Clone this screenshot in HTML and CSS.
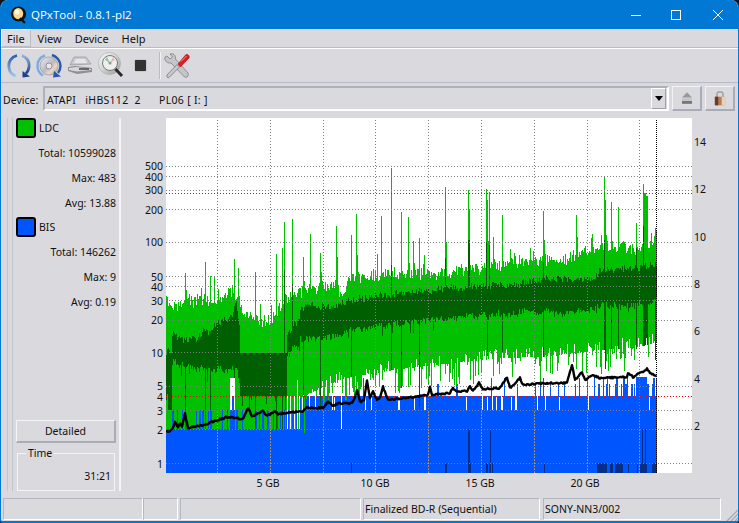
FILE: index.html
```html
<!DOCTYPE html>
<html lang="en">
<head>
<meta charset="utf-8">
<title>QPxTool - 0.8.1-pl2</title>
<link rel="stylesheet" href="styles.css">
</head>
<body>
<div class="window">
  <header class="titlebar">
    <svg class="app-icon" viewBox="0 0 18 18" width="18" height="18">
      <circle cx="8.5" cy="8" r="7.6" fill="#111"/>
      <ellipse cx="8.2" cy="7.6" rx="5" ry="5.6" fill="#f6d98a"/>
      <ellipse cx="7" cy="6" rx="2.4" ry="2.8" fill="#fff6dc"/>
      <path d="M10 12 L15 17" stroke="#111" stroke-width="2.4"/>
    </svg>
    <span class="title-text">QPxTool - 0.8.1-pl2</span>
    <div class="win-buttons">
      <svg class="win-btn" viewBox="0 0 10 10" width="10" height="10"><path d="M0 5.5H10" stroke="#fff"/></svg>
      <svg class="win-btn" viewBox="0 0 10 10" width="10" height="10"><rect x=".5" y=".5" width="9" height="9" fill="none" stroke="#fff"/></svg>
      <svg class="win-btn close" viewBox="0 0 10 10" width="10" height="10"><path d="M0 0L10 10M10 0L0 10" stroke="#fff" stroke-width="1"/></svg>
    </div>
  </header>

  <nav class="menubar">
    <span class="menu-item active">File</span>
    <span class="menu-item">View</span>
    <span class="menu-item">Device</span>
    <span class="menu-item">Help</span>
  </nav>

  <div class="toolbar">
    <svg class="tool t-refresh" viewBox="0 0 24 24" width="24" height="24">
      <defs>
        <linearGradient id="ga" x1="0" y1="0" x2="0" y2="1"><stop offset="0" stop-color="#2f5fa8"/><stop offset="1" stop-color="#9cc4ea"/></linearGradient>
        <linearGradient id="gb" x1="0" y1="0" x2="0" y2="1"><stop offset="0" stop-color="#8fb4dc"/><stop offset="1" stop-color="#1c3f8c"/></linearGradient>
      </defs>
      <path d="M10 1.5C4 3 1.5 8 1.8 12.500C2 17 4.500 20.500 8.500 22" fill="none" stroke="url(#ga)" stroke-width="2.800"/>
      <path d="M15 1.500C20 3.500 22.500 8 22 13C21.700 16 20.500 18 19 19.500" fill="none" stroke="url(#gb)" stroke-width="2.800"/>
      <path d="M15.500 17L23 22.500L15.500 23.500Z" fill="#1c3f8c"/>
    </svg>
    <svg class="tool t-disc" viewBox="0 0 26 26" width="26" height="26">
      <defs>
        <linearGradient id="gd" x1="0" y1="0" x2="1" y2="1"><stop offset="0" stop-color="#f0f0f0"/><stop offset=".5" stop-color="#b9b9c0"/><stop offset=".7" stop-color="#e8d8c8"/><stop offset="1" stop-color="#8e8e98"/></linearGradient>
      </defs>
      <circle cx="13" cy="13" r="9" fill="url(#gd)" stroke="#8a8a92" stroke-width=".6"/>
      <circle cx="13" cy="13" r="3" fill="#e8e8ec" stroke="#77777f" stroke-width=".7"/>
      <path d="M9 2.500C4 4 1.500 8 1.500 13C1.500 17 3.500 20.500 7 22.500" fill="none" stroke="#7faadf" stroke-width="2.400"/>
      <path d="M16 2C21 3.500 24.500 8 24.500 13C24.500 16 23.500 18 22 20" fill="none" stroke="#2a58a8" stroke-width="2.400"/>
      <path d="M18 18L25 23.500L17 24.500Z" fill="#2a58a8"/>
    </svg>
    <svg class="tool t-drive" viewBox="0 0 26 20" width="26" height="20">
      <path d="M7 1L19 1L24 8L3 9Z" fill="#c9c9cc" stroke="#8c8c92" stroke-width=".6"/>
      <path d="M9 3L18 3L20 7L7 7Z" fill="#e6e6e8"/>
      <path d="M1 11L8 10L25 12L25 16L10 18L1 15Z" fill="#8f8f94"/>
      <path d="M2 12L9 11L24 13L24 14L10 15.500L2 14Z" fill="#d8d8da"/>
      <path d="M12 13H22" stroke="#444" stroke-width="1.400"/>
    </svg>
    <svg class="tool t-scan" viewBox="0 0 26 27" width="26" height="27">
      <defs>
        <linearGradient id="gs" x1="0" y1="0" x2="1" y2="1"><stop offset="0" stop-color="#fdfdfd"/><stop offset=".45" stop-color="#d5d8d6"/><stop offset="1" stop-color="#97979a"/></linearGradient>
      </defs>
      <circle cx="11.500" cy="11.500" r="11" fill="url(#gs)" stroke="#a8a8ac" stroke-width=".6"/>
      <circle cx="12" cy="11" r="7.500" fill="#eef0ee" stroke="#77777a" stroke-width="1"/>
      <path d="M7 8L12 11L9 5Z" fill="#8fc7a0"/>
      <path d="M12 11L15 5L17 8Z" fill="#e8b8c0"/>
      <circle cx="12" cy="11" r="1.600" fill="#999"/>
      <path d="M17.500 17L24 24" stroke="#2a2a2a" stroke-width="3"/>
    </svg>
    <span class="t-stop"></span>
    <span class="tool-sep"></span>
    <svg class="tool t-tools" viewBox="0 0 26 26" width="26" height="26">
      <path d="M3 3L6 6L8.500 4L6 1C9 0 12 2 11.500 6L24 20C25 23 23 25 20.500 24L7 10C3.500 10.500 0 8 1 4Z" fill="#c4c6ca" stroke="#74767c" stroke-width=".7"/>
      <path d="M3 22L13 11.500L15.500 14L5 24.500C3.500 25 2.500 24 3 22Z" fill="#c6c8cc" stroke="#6c6e74" stroke-width=".7"/>
      <path d="M14 11L22 1.500C24 1 26 3 25 5L16.500 14Z" fill="#e01c20" stroke="#a01418" stroke-width=".6"/>
      <path d="M17 8.500L22.500 3" stroke="#ff8c8c" stroke-width="1"/>
    </svg>
  </div>

  <div class="device-row">
    <span class="device-label">Device:</span>
    <div class="combo">
      <span class="combo-text">ATAPI   iHBS112  2      PL06 [ I: ]</span>
      <span class="combo-arrow"><i class="arrow"></i></span>
    </div>
    <button class="icon-btn">
      <svg viewBox="0 0 12 14" width="10" height="12">
        <path d="M6 0L12 6.500H0Z" fill="#9a9a9c"/>
        <rect x="0" y="7.500" width="12" height="2.500" fill="#c4c4c6"/>
        <rect x="0" y="10.500" width="12" height="3.500" fill="#77777a"/>
      </svg>
    </button>
    <button class="icon-btn">
      <svg viewBox="0 0 14 18" width="12" height="16">
        <path d="M3.500 8V4.500C3.500 1 10.500 1 10.500 4.500V8" fill="none" stroke="#a8a8aa" stroke-width="2"/>
        <rect x="1" y="7.500" width="12" height="10" rx="1" fill="#b58058"/>
        <rect x="1" y="7.500" width="4" height="10" fill="#6e3a24"/>
        <rect x="9" y="7.500" width="4" height="10" fill="#e6d2b8"/>
      </svg>
    </button>
  </div>

  <main class="main">
    <aside class="side">
      <div class="legend"><span class="swatch ldc"></span><span>LDC</span></div>
      <div class="stat">Total: 10599028</div>
      <div class="stat">Max: 483</div>
      <div class="stat">Avg: 13.88</div>
      <div class="legend second"><span class="swatch bis"></span><span>BIS</span></div>
      <div class="stat">Total: 146262</div>
      <div class="stat">Max: 9</div>
      <div class="stat">Avg: 0.19</div>
      <div class="spacer"></div>
      <button class="detailed">Detailed</button>
      <fieldset class="time">
        <legend>Time</legend>
        <div class="time-value">31:21</div>
      </fieldset>
    </aside>
    <section class="chart-area">
      <div class="plot">
        <canvas id="chart" width="526" height="355"></canvas>
        <span class="yl" style="top:41px">500</span>
        <span class="yl" style="top:52px">400</span>
        <span class="yl" style="top:65px">300</span>
        <span class="yl" style="top:85px">200</span>
        <span class="yl" style="top:117px">100</span>
        <span class="yl" style="top:152px">50</span>
        <span class="yl" style="top:162px">40</span>
        <span class="yl" style="top:176px">30</span>
        <span class="yl" style="top:195px">20</span>
        <span class="yl" style="top:228px">10</span>
        <span class="yl" style="top:261px">5</span>
        <span class="yl" style="top:272px">4</span>
        <span class="yl" style="top:286px">3</span>
        <span class="yl" style="top:305px">2</span>
        <span class="yl" style="top:339px">1</span>
        <span class="yr" style="top:17px">14</span>
        <span class="yr" style="top:64px">12</span>
        <span class="yr" style="top:112px">10</span>
        <span class="yr" style="top:159px">8</span>
        <span class="yr" style="top:206px">6</span>
        <span class="yr" style="top:254px">4</span>
        <span class="yr" style="top:301px">2</span>
        <span class="xl" style="left:82px">5 GB</span>
        <span class="xl" style="left:189px">10 GB</span>
        <span class="xl" style="left:294px">15 GB</span>
        <span class="xl" style="left:399px">20 GB</span>
      </div>
    </section>
  </main>

  <footer class="statusbar">
    <div class="cell c1"></div>
    <div class="cell c2"></div>
    <div class="cell c3"></div>
    <div class="cell c4">Finalized BD-R (Sequential)</div>
    <div class="cell c5">SONY-NN3/002</div>
    <svg class="grip" viewBox="0 0 12 12" width="12" height="12"><path d="M12 1L1 12M12 5L5 12M12 9L9 12" stroke="#a4a6b0" stroke-width="1.200"/></svg>
  </footer>
</div>
<script src="chart.js"></script>
</body>
</html>
```

FILE: styles.css
```css
* { box-sizing: border-box; }
html, body { margin: 0; padding: 0; width: 739px; height: 523px; overflow: hidden; background: #10141c; }
body { font-family: "Noto Sans", "DejaVu Sans", sans-serif; font-size: 10.5px; color: #111; }

.window {
  width: 739px; height: 523px; display: flex; flex-direction: column;
  background: #d9d9de; border: 1px solid #0078d4; border-top: 0; border-bottom-width: 2px;
  border-radius: 8px 8px 3px 3px; overflow: hidden;
}

.titlebar { height: 29px; flex: none; background: #0078d4; color: #fff; display: flex; align-items: center; padding-left: 9px; }
.app-icon { flex: none; margin-top: 1px; }
.title-text { font-family: "Open Sans", "Noto Sans", sans-serif; font-size: 11.5px; margin-left: 3px; }
.win-buttons { margin-left: auto; display: flex; gap: 30px; padding-right: 15px; }
.win-btn.close { margin-left: 2px; }

.menubar { height: 20px; flex: none; display: flex; border-bottom: 1px solid #fff; box-shadow: inset 0 -1px 0 #b9bbc6; }
.menu-item { padding: 2px 6px 0; font-size: 11px; line-height: 16px; margin-right: 1px; }
.menu-item.active { background: #dcdce2; box-shadow: inset 1px 1px 0 #f4f4f6, inset -1px -1px 0 #bcbcc6; height: 18px; }

.toolbar { height: 34px; flex: none; display: flex; align-items: center; border-bottom: 1px solid #b9bbc6; padding-left: 6px; }
.tool { flex: none; }
.t-disc, .t-drive, .t-scan { margin-left: 5px; }
.t-stop { width: 11px; height: 11px; background: #333; margin-left: 11px; border-radius: 1px; flex: none; box-shadow: 0 0 1px #333; }
.tool-sep { width: 2px; height: 27px; background: #f2f2f4; margin-left: 13px; border-left: 1px solid #b9bbc6; flex: none; }
.t-tools { margin-left: 3px; }

.device-row { height: 34px; flex: none; display: flex; align-items: center; padding: 0 3px 0 2px; }
.device-label { width: 40px; flex: none; }
.combo {
  width: 626px; height: 25px; flex: none; margin-bottom: 3px; display: flex; align-items: center; justify-content: space-between;
  border: 2px solid #fff; border-top-color: #aeb0bc; border-left-color: #aeb0bc; padding-left: 2px;
}
.combo-text { white-space: pre; letter-spacing: .3px; padding-top: 3px; }
.combo-arrow { width: 15px; height: 21px; margin-right: 1px; display: flex; align-items: center; justify-content: center; border: 1px solid #fff; border-right-color: #9fa1ad; border-bottom-color: #9fa1ad; }
.arrow { width: 0; height: 0; border: 4px solid transparent; border-top: 5px solid #000; border-bottom: 0; }
.icon-btn {
  width: 30px; height: 25px; flex: none; margin: 0 0 3px 3px; padding: 0; background: #d9d9de;
  border: 1px solid #f2f2f4; border-right: 2px solid #a9abb7; border-bottom: 2px solid #a9abb7;
  display: flex; align-items: center; justify-content: center;
}

.main { flex: 1; min-height: 0; display: flex; padding-top: 1px; padding-left: 6px; }
.side {
  width: 114px; height: 373px; flex: none; display: flex; flex-direction: column; padding: 0 3px 0 8px;
  border-left: 1px solid #c2c4ce; border-right: 2px solid #f4f4f6;
  box-shadow: inset 4px 0 0 #d9d9de, inset 5px 0 0 #c2c4ce;
}
.legend { height: 20px; display: flex; align-items: center; gap: 3px; }
.legend.second { margin-top: 4px; }
.swatch { width: 20px; height: 20px; border: 2px solid #000; border-radius: 3px; flex: none; }
.swatch.ldc { background: #00c000; }
.swatch.bis { background: #0055ff; }
.stat { height: 25px; display: flex; align-items: center; justify-content: flex-end; position: relative; top: 2px; }
.spacer { flex: 1; }
.detailed {
  width: 100px; height: 23px; flex: none; font: inherit; color: inherit; padding: 0; background: #d9d9de;
  border: 1px solid #f4f4f6; border-right: 2px solid #a9abb7; border-bottom: 2px solid #a9abb7;
}
.time { width: 98px; height: 43px; flex: none; margin: 5px 0 0 1px; padding: 0 3px; border: 1px solid #f4f4f6; min-width: 0; }
.time legend { padding: 0 2px; margin-left: 5px; line-height: 11px; }
.time-value { text-align: right; margin-top: 10px; line-height: 14px; }

.chart-area { flex: 1; min-width: 0; padding-left: 45px; }
.plot { position: relative; width: 526px; height: 355px; background: #fff; }
#chart { display: block; width: 526px; height: 355px; }
.yl, .yr, .xl { position: absolute; line-height: 14px; white-space: nowrap; }
.yl { right: calc(100% + 3px); }
.yr { left: calc(100% + 2px); }
.xl { top: 358px; width: 40px; text-align: center; }

.statusbar { height: 26px; flex: none; display: flex; align-items: flex-start; padding: 3px 0 0 2px; position: relative; }
.cell { height: 22px; flex: none; border: 1px solid #fff; border-top-color: #b4b6c2; border-left-color: #b4b6c2; line-height: 21px; padding-left: 1px; white-space: nowrap; }
.c1 { width: 140px; }
.c2 { width: 35px; }
.c3 { width: 181px; margin-left: 2px; }
.c4 { width: 177px; margin-left: 2px; }
.c5 { width: 178px; margin-left: 3px; }
.grip { position: absolute; right: 0; bottom: 0; }
```

FILE: chart.js
```js
(function () {
  var cv = document.getElementById('chart');
  var c = cv.getContext('2d');
  var OX = 166, OY = 118, END = 656;
  var seed = 12345;
  function R() { seed = (seed * 1664525 + 1013904223) >>> 0; return seed / 4294967296; }
  function lerp(p, x) {
    for (var i = 1; i < p.length; i++) {
      if (x <= p[i][0]) {
        var a = p[i - 1], b = p[i];
        return a[1] + (b[1] - a[1]) * (x - a[0]) / (b[0] - a[0]);
      }
    }
    return p[p.length - 1][1];
  }
  function col(color, x, y0, y1) {
    if (y1 <= y0) return;
    c.fillStyle = color;
    c.fillRect(x - OX, Math.round(y0) - OY, 1, Math.round(y1) - Math.round(y0));
  }

  var GREEN = '#00c000', DARK = '#005f00', BLUE = '#0055ff', NAVY = '#062f85';

  var lightTop = [[166,302],[180,307],[200,298],[220,301],[232,290],[245,311],[255,319],[270,321],[285,298],[300,292],[320,286],[335,286],[340,292],[350,279],[370,275],[400,274],[440,273],[470,269],[490,268],[510,264],[520,260],[560,260],[580,254],[600,247],[620,246],[640,249],[650,246],[656,234]];
  var lightBot = [[166,429],[296,429],[300,398],[329,384],[345,378],[400,369],[500,358],[540,357],[600,350],[640,347],[656,342]];
  var darkTop = [[166,353],[171,353],[172,332],[180,338],[200,337],[215,330],[232,318],[236,307],[239,330],[240,353],[286,353],[287,327],[298,318],[302,307],[340,304],[350,298],[400,294],[460,289],[510,284],[560,279],[595,276],[600,268],[630,268],[656,263]];
  var darkBot = [[166,393],[171,393],[172,362],[200,364],[232,366],[238,372],[240,396],[286,396],[287,352],[300,338],[340,334],[350,328],[400,324],[460,318],[510,314],[560,314],[600,305],[630,304],[656,300]];
  var spikes = {185:273,205:262,210:276,234:259,238:268,255:272,276:254,282:248,284:222,292:219,303:257,310:234,320:253,336:226,351:235,356:214,381:216,391:168,401:212,408:217,413:241,419:238,445:187,468:190,469:210,486:189,487:200,489:192,493:237,502:215,543:211,576:215,604:177,605:200,611:202,618:207,636:223,643:184,644:193,645:193,646:196,647:196,655:228};
  var darkSpikes = {284:270,292:284,391:265,445:258,468:240,469:240,486:242,489:245,604:240,643:226,636:248,543:262};
  var blueTop = {};

  // blue layer
  for (var x = OX; x <= END; x++) {
    var top;
    if (x < 172) top = 429;
    else if (x < 300) top = R() < 0.35 ? 410 : 429;
    else {
      top = R() < (x < 330 ? 0.75 : x < 450 ? 0.86 : 0.92) ? 396 : 410;
      if (x > 360 && R() < (x > 590 ? 0.4 : 0.1)) top = 378 + (R() < .5 ? 0 : 6);
      if (x >= 636 && x <= 646) top = 377;
    }
    if (x >= 230 && x <= 234) top = R() < .7 ? 396 : 410;
    if (x === 341) top = 429;
    blueTop[x] = top;
    col(BLUE, x, top, 473);
  }
  [[351,1],[445,2],[468,3],[486,2],[489,2],[492,1],[544,1],[597,10],[610,3],[615,8],[628,1],[637,1],[640,7],[652,5]].forEach(function (b) {
    c.fillStyle = NAVY;
    c.fillRect(b[0] - OX, 463 - OY, b[1], 10);
  });
  [[468,2],[490,1],[642,1],[645,1]].forEach(function (b) {
    c.fillStyle = NAVY;
    c.fillRect(b[0] - OX, 429 - OY, b[1], 44);
  });

  // LDC layer
  var walkT = 0, walkB = 0;
  for (x = OX; x <= END; x++) {
    var t = lerp(lightTop, x);
    t += R() * 13 - 6;
    if (R() < 0.12) t -= R() * 18;
    if (spikes[x]) t = spikes[x];
    else if (spikes[x - 1] && R() < .5) t -= (t - spikes[x - 1]) * 0.4;
    var b = lerp(lightBot, x);
    if (x < 172) { b = 429; }
    else if (x < 300) {
      b = Math.min(blueTop[x], 429);
      if (x >= 230 && x <= 234) b = 378;
      if (x > 286 && R() < .4) b = 396;
      if (x > 290 && R() < .35) b = 380;
    } else {
      var r = R();
      if (r < 0.3) b += R() * 24;
      else if (r < 0.6) b -= R() * 10;
      if (R() < 0.03) b += 18;
    }
    col(GREEN, x, t, b);

    walkT = Math.max(-6, Math.min(6, walkT + R() * 4 - 2));
    walkB = Math.max(-7, Math.min(7, walkB + R() * 4 - 2));
    var dt = lerp(darkTop, x), db = lerp(darkBot, x);
    if (x < 240 || x > 286) {
      var amp = x < 300 ? 1 : 0.35;
      dt += walkT * amp + R() * 7 - 3.5;
      db += walkB * amp + R() * 7 - 3.5;
      if (R() < 0.06) db += R() * 12;
    } else {
      if (R() < 0.15) db = 396 + R() * 14;
    }
    if (darkSpikes[x]) dt = darkSpikes[x];
    col(DARK, x, dt, db);
    if (x >= 166 && x < 172 && R() < .5) col(DARK, x, 353, 410);
    if (spikes[x] && R() < .6) col(DARK, x, db, b);
  }

  // grid
  function hdots(y, color, step) {
    c.fillStyle = color;
    for (var i = 0; i < 526; i += step) c.fillRect(i, y - OY, 1, 1);
  }
  function vdots(x, color, step) {
    c.fillStyle = color;
    for (var j = 2; j < 355; j += step) c.fillRect(x - OX, j, 1, 1);
  }
  [166,176,190,209,242,276,286,300,320,352,386,410,429,463].forEach(function (y) { hdots(y, '#808080', 3); });
  [217,270,323,375,428,481,534,587,639].forEach(function (x) {
    vdots(x, '#808080', 3);
    c.fillStyle = '#b89a60';
    for (var j = 294; j < 355; j += 3) c.fillRect(x - OX, j, 1, 1);
  });
  hdots(396, '#ff0000', 3);
  hdots(193, '#ff0000', 3);
  vdots(656, '#000000', 2);

  // black average line, with per-column jitter
  var line = [[166,432],[172,430],[175,422],[178,428],[180,423],[182,426],[185,414],[188,428],[203,425],[227,417],[243,419],[248,408],[252,416],[263,411],[267,416],[275,411],[278,414],[303,411],[307,408],[323,408],[328,402],[333,406],[338,403],[350,404],[354,400],[357,390],[360,402],[364,400],[367,380],[370,398],[373,392],[377,400],[380,398],[383,387],[388,400],[413,397],[428,395],[430,386],[432,395],[450,393],[453,388],[457,392],[467,391],[470,386],[473,391],[479,383],[483,389],[500,388],[507,377],[510,388],[520,378],[523,385],[547,383],[567,383],[572,365],[575,380],[582,372],[585,380],[592,375],[600,378],[627,377],[628,373],[633,377],[647,369],[650,373],[656,376]];
  c.strokeStyle = '#000';
  c.lineWidth = 2.4;
  c.lineJoin = 'round';
  c.beginPath();
  for (x = OX; x <= END; x++) {
    var y = lerp(line, x) + R() * 1.6 - 0.8;
    if (x === OX) c.moveTo(0, y - OY); else c.lineTo(x - OX, y - OY);
  }
  c.stroke();
})();
```
